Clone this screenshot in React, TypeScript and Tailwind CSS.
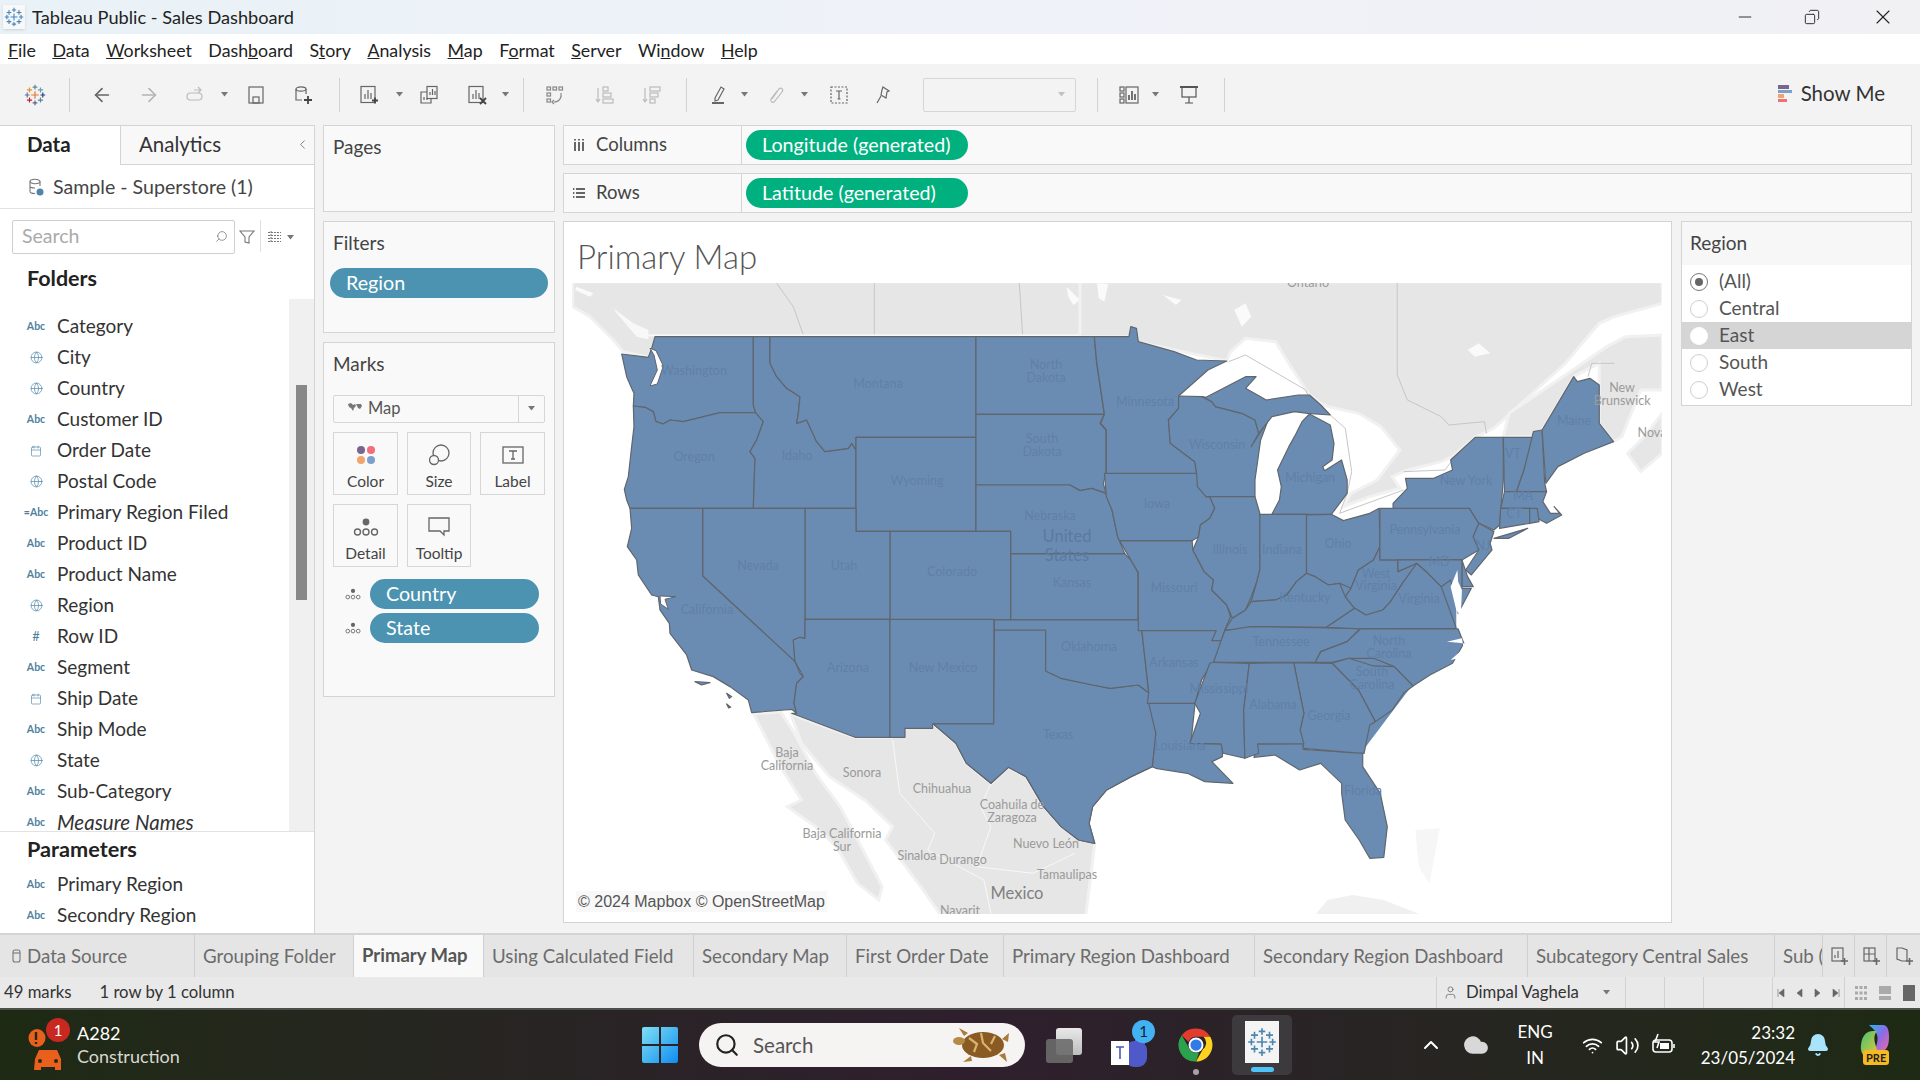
import React from 'react';
import { Globe, Calendar, ChevronLeft, Search, ArrowLeft, ArrowRight, Minus, X, Copy, Wifi, Volume2, ChevronUp, Bell, Cloud, User } from 'lucide-react';

// ---------- map geometry, written in the coordinates read off the reference crops ----------
const WEST = [
  '255,170 550,170 550,375 557,398 450,398 380,415 340,425 300,420 280,432 258,425 250,395 225,382 190,378 192,340 185,325 170,290 155,222 235,232 245,205',
  '190,378 225,382 250,395 258,425 280,432 300,420 340,425 380,415 450,398 557,398 580,425 560,480 540,515 555,535 550,685 180,685 170,660 163,628 175,590 185,500 192,440',
  '550,170 600,170 600,250 620,290 650,325 690,350 685,400 680,430 710,420 740,485 765,515 835,505 845,490 858,510 858,685 550,685 555,535 540,515 560,480 580,425 557,398 550,375',
  '600,170 1218,170 1218,472 858,472 858,510 845,490 835,505 765,515 740,485 710,420 680,430 685,400 690,350 650,325 620,290 600,250',
  '858,472 1218,472 1218,754 858,754',
  '1218,170 1573,170 1580,250 1603,403 1218,403',
  '1218,403 1603,403 1590,430 1608,450 1608,580 1600,610 1608,640 1565,625 1530,632 1500,615 1218,615',
  '1218,615 1500,615 1530,632 1565,625 1608,640 1626,690 1643,770 1648,782 1665,822 1322,822 1322,754 1218,754',
  '1322,822 1665,822 1683,840 1704,878 1704,1020 1322,1020',
  '960,754 1322,754 1322,1020 960,1020',
  '705,685 858,685 858,754 960,754 960,1018 705,1018',
  '398,685 705,685 705,1075 690,1072 670,1080 675,1145 398,888',
  '180,685 398,685 398,888 675,1145 690,1180 700,1190 680,1210 672,1270 680,1300 665,1288 545,1298 535,1260 480,1220 430,1190 365,1170 350,1125 300,1060 298,1030 270,990 265,950 245,945 205,885 200,840 172,800 185,745',
  '705,1018 960,1018 960,1372 855,1372 665,1300 680,1300 672,1270 680,1210 700,1190 675,1145 670,1080 690,1072 705,1075',
  '960,1018 1272,1018 1272,1332 1088,1332 1088,1345 1005,1345 1005,1372 960,1372',
];

const SOUTH = [
  '605,30 678,30 678,153 700,175 745,195 770,205 810,195 825,218 825,250 835,340 830,440 800,470 765,510 745,560 740,610 748,670 725,660 700,620 675,560 650,470 625,442 600,490 565,430 550,370 518,312 604,312',
  '605,30 605,0 810,0 815,30 825,218 810,195 770,205 745,195 700,175 678,153 678,30',
  '810,30 934,30 932,60 930,85 915,130 900,180 891,250 823,250 825,218 815,30',
  '823,250 891,250 885,370 930,372 930,410 915,425 945,490 905,485 880,460 835,445 830,440 835,340',
  '980,372 1045,372 1045,388 1115,398 1130,385 1130,440 1155,520 1165,620 1160,712 1140,715 1125,660 1105,600 1100,520 1100,490 1070,430 1040,450 1005,405 975,412',
];

const EAST = [
  '105,782 298,782 300,810 330,875 355,900 350,930 390,975 400,1010 385,1050 375,1082 350,1082 362,1052 155,1052 155,878 135,840',
  '65,580 310,580 320,630 345,650 358,685 345,715 320,735 315,770 298,782 105,782 100,770 85,690 70,650',
  '38,170 130,170 135,140 150,145 155,185 250,215 310,240 390,243 340,270 262,348 262,385 235,420 240,490 305,545 310,580 70,580 70,450 55,430 65,403 45,250',
  '262,348 325,350 350,365 360,380 430,400 465,420 475,460 455,500 500,420 480,480 465,600 465,650 335,650 312,620 310,580 305,545 240,490 235,420 262,385',
  '325,350 335,352 440,290 468,290 440,325 495,360 580,345 610,345 640,375 665,405 605,400 570,395 510,410 475,460 465,420 430,400 360,380 350,365',
  '610,402 665,435 675,490 670,540 645,560 650,572 695,540 710,600 710,640 680,685 668,703 510,703 530,660 535,620 525,570 555,500 570,470 590,425',
  '335,650 465,650 478,700 478,870 470,905 455,950 440,990 405,1015 390,975 350,930 355,900 330,875 300,810 315,770 320,735 345,715 358,685 345,650',
  '478,703 602,703 602,880 575,905 550,945 520,960 455,965 470,905 478,870',
  '602,705 668,703 700,722 770,700 795,685 797,800 780,840 740,870 720,925 690,910 660,915 625,890 602,880',
  '455,965 520,960 550,945 575,905 602,880 625,890 660,915 690,910 705,950 730,985 655,1042 453,1040 452,1050 385,1050 405,1015 440,990',
  '385,1052 453,1040 745,1045 710,1085 640,1115 625,1147 355,1147 375,1082',
  '720,925 740,870 780,840 797,800 797,840 845,840 845,875 895,850 895,870 860,905 825,965 805,990 760,1005 730,985 705,950',
  '655,1042 730,985 760,1005 805,990 825,965 860,905 895,850 925,880 960,920 1000,1045 745,1047',
  '745,1047 1005,1047 1020,1090 990,1150 930,1185 885,1218 835,1160 780,1135 715,1135 670,1147 625,1147 640,1115 710,1085',
  '670,1150 715,1135 780,1158 835,1160 885,1218 860,1240 830,1290 785,1325 740,1230',
  '568,1148 670,1150 740,1230 785,1325 770,1335 755,1420 725,1418 595,1405 585,1350 595,1300',
  '355,1147 450,1150 435,1290 438,1435 380,1420 375,1392 292,1390 320,1300 305,1270 345,1150',
  '450,1150 568,1148 595,1300 585,1350 595,1392 472,1392 475,1420 438,1435 435,1290',
  '797,685 1035,685 1060,730 1045,770 1060,810 1015,840 797,840',
  '832,685 832,670 870,625 865,595 940,595 990,570 985,540 1050,472 1125,472 1125,600 1115,735 1100,750 1060,730 1035,685',
  '1100,775 1190,745 1140,775',
  '1125,472 1205,472 1180,570 1160,635 1128,635',
  '1205,455 1228,450 1235,610 1240,635 1160,635 1180,570',
  '1228,450 1265,380 1312,290 1322,305 1355,295 1380,315 1380,430 1418,485 1340,520 1270,560 1238,610',
  '1128,635 1240,635 1230,665 1250,700 1275,700 1260,680 1280,705 1240,730 1215,715 1195,685 1118,685',
  '1118,685 1195,685 1195,730 1115,745',
  '1195,685 1215,685 1220,725 1195,730',
  '1060,730 1100,755 1090,790 1095,810 1040,885 1025,870 1060,810 1045,770',
  '1015,840 1030,890 1045,920 1015,920',
  '845,840 1015,840 1015,925 1040,925 1005,1000 985,900 960,920 925,880 895,850 845,875',
];

const STATE_LABELS: [string, number, number][] = [
  ['Washington', 694, 372], ['Montana', 878, 385], ['North', 1046, 366], ['Dakota', 1046, 379], ['South', 1042, 440], ['Dakota', 1042, 453],
  ['Oregon', 694, 458], ['Idaho', 797, 457], ['Wyoming', 917, 482], ['Nebraska', 1050, 517], ['Nevada', 758, 567], ['Utah', 844, 567],
  ['Colorado', 952, 573], ['Kansas', 1072, 584], ['California', 707, 611], ['Arizona', 848, 669], ['New Mexico', 943, 669], ['Oklahoma', 1089, 648],
  ['Texas', 1058, 736], ['Minnesota', 1145, 403], ['Wisconsin', 1217, 446], ['Michigan', 1310, 479], ['Iowa', 1157, 505], ['Illinois', 1230, 551],
  ['Indiana', 1282, 551], ['Ohio', 1338, 545], ['Pennsylvania', 1425, 531], ['New York', 1466, 482], ['VT', 1513, 455], ['MA', 1523, 497],
  ['CT', 1514, 515], ['Maine', 1574, 422], ['NJ', 1483, 547], ['MD', 1439, 563], ['West', 1376, 575], ['Virginia', 1376, 587], ['Virginia', 1419, 600],
  ['Kentucky', 1305, 599], ['Missouri', 1174, 589], ['Tennessee', 1281, 643], ['North', 1389, 642], ['Carolina', 1389, 655], ['Arkansas', 1174, 664],
  ['South', 1372, 673], ['Carolina', 1372, 686], ['Mississippi', 1219, 690], ['Alabama', 1273, 706], ['Georgia', 1329, 717], ['Louisiana', 1180, 747], ['Florida', 1363, 792],
];

const LAND_LABELS: [string, number, number][] = [
  ['New', 1622, 389], ['Brunswick', 1622, 402], ['Nova', 1652, 434], ['Ontario', 1308, 284], ['Baja', 787, 754], ['California', 787, 767], ['Sonora', 862, 774],
  ['Chihuahua', 942, 790], ['Coahuila de', 1012, 806], ['Zaragoza', 1012, 819], ['Baja California', 842, 835], ['Sur', 842, 848], ['Nuevo León', 1046, 845],
  ['Sinaloa', 917, 857], ['Durango', 963, 861], ['Tamaulipas', 1067, 876], ['Navarit', 960, 912],
];

const UsMap = () => {
  const land = { fill: '#e6e6e6', stroke: '#f1f1f1', strokeWidth: 3, vectorEffect: 'non-scaling-stroke' as const };
  const state = { fill: '#6b8cb2', stroke: '#5f666e', strokeWidth: 1.2, strokeLinejoin: 'round' as const, vectorEffect: 'non-scaling-stroke' as const };
  const line = { fill: 'none', stroke: '#c6c6c6', strokeWidth: 1, vectorEffect: 'non-scaling-stroke' as const };
  return (
    <svg viewBox="572 283 1090 631" className="block w-[1090px] h-[631px] bg-white">
      <g transform="translate(570 280) scale(0.3333 0.3333)">
        <polygon {...land} points="8,5 1600,5 1600,170 260,170 235,232 160,215 130,180 60,110 8,80" />
        <polygon points="130,85 190,130 235,150 235,178 200,170 140,100" fill="#f8f8f8" />
        <polygon points="20,20 70,40 60,50 15,30" fill="#fafafa" />
        <polygon points="1490,20 1530,60 1510,75 1495,50" fill="#fafafa" />
        <polyline {...line} points="620,10 670,80 700,165" />
        <polyline {...line} points="913,8 913,165" />
        <polyline {...line} points="1348,8 1358,165" />
        <rect x="230" y="163" width="1370" height="6" fill="#f8f8f8" />
      </g>
      <g transform="translate(1080 280) scale(0.37628 0.3333)">
        <polygon {...land} points="0,5 1547,5 1547,70 1420,110 1380,130 1290,250 1100,445 1050,472 990,530 960,545 870,570 830,590 850,625 770,650 700,680 720,640 790,600 830,540 850,510 800,440 740,400 660,380 640,370 610,345 560,260 520,185 440,175 400,215 390,243 150,185 130,170 0,170" />
        <polygon {...land} points="1140,400 1290,285 1400,200 1450,170 1547,165 1547,330 1490,330 1440,470 1418,485 1380,430 1380,250 1312,290 1265,380 1228,450 1205,470 1125,470" />
        <polygon {...land} points="1455,520 1490,575 1547,520 1547,400 1500,470" />
        <polygon points="410,90 440,70 455,110 430,140" fill="#fafafa" />
        <polygon points="1030,210 1060,190 1090,220 1050,230" fill="#fafafa" />
        <polygon points="220,45 270,60 255,75" fill="#fafafa" />
        <polygon points="45,10 75,12 65,65 50,55" fill="#fafafa" />
        <polyline {...line} points="843,8 843,285 870,360 960,410 980,435 1075,425 1080,460" />
        <polyline {...line} points="1350,290 1360,250 1420,250" />
        <polyline {...line} points="395,245 440,225 600,330 610,360" />
        <polyline {...line} points="660,400 705,445 722,575 710,640 690,700 860,630" />
        <polyline {...line} points="860,575 970,570 990,540" />
      </g>
      <g transform="translate(570 620) scale(0.70153 0.3333)">
        <polygon {...land} points="262,282 300,275 320,340 350,460 385,560 445,800 440,840 410,790 380,680 350,620 310,560 330,540 300,440" />
        <polygon {...land} points="315,283 405,352 460,352 478,325 518,312 550,370 565,430 600,490 625,442 650,470 675,560 700,620 748,670 735,890 530,890 500,800 450,660 460,620 420,540 370,470 330,370" />
        <polyline fill="none" stroke="#f8f8f8" strokeWidth="1" vectorEffect="non-scaling-stroke" points="460,360 470,520 520,640 510,690 590,780 600,880" />
        <polyline fill="none" stroke="#f8f8f8" strokeWidth="1" vectorEffect="non-scaling-stroke" points="600,490 585,560 600,620 580,740 660,760 720,700" />
        <polygon points="1060,890 1080,840 1115,825 1160,840 1220,890" fill="#f0f0f0" />
        <polygon points="1205,630 1240,625 1225,790 1210,740" fill="#f6f6f6" />
        {SOUTH.map((p, i) => <polygon key={i} {...state} points={p} />)}
      </g>
      <g transform="translate(570 280) scale(0.3333 0.3333)">
        {WEST.map((p, i) => <polygon key={i} {...state} points={p} />)}
        <polygon points="240,205 258,212 280,258 262,312 240,318 262,270 252,225" fill="#fff" stroke="#5f666e" strokeWidth="1" vectorEffect="non-scaling-stroke" />
        <polygon points="270,948 318,950 285,958 295,988 272,972" fill="#fff" stroke="#5f666e" strokeWidth="1" vectorEffect="non-scaling-stroke" />
        <polygon points="375,1205 420,1208 395,1215" {...state} />
        <polygon points="470,1240 485,1250 478,1255" {...state} />
        <polygon points="470,1272 482,1282 476,1284" {...state} />
      </g>
      <g transform="translate(570 620) scale(0.70153 0.3333)">
        {SOUTH.slice(0, 3).map((p, i) => <polygon key={i} {...state} points={p} />)}
      </g>
      <g transform="translate(1080 280) scale(0.37628 0.3333)">
        <polygon points="345,800 470,720 700,740 1000,720 1000,1040 760,1400 450,1390 345,1380 345,1150" fill="#6b8cb2" />
        {EAST.map((p, i) => <polygon key={i} {...state} points={p} />)}
        <polygon points="1003,870 985,920 1000,990 1012,1010 1015,930 1005,905" fill="#fff" />
        <polygon points="975,1085 1015,1075 1020,1105 985,1140 1028,1130 1020,1090" fill="#fff" />
      </g>
      <g fontFamily="Lato, sans-serif" fontSize="12.5" textAnchor="middle" dominantBaseline="middle">
        {STATE_LABELS.map(([t, x, y], i) => <text key={i} x={x} y={y} fill="#5f80a8">{t}</text>)}
        {LAND_LABELS.map(([t, x, y], i) => <text key={i} x={x} y={y} fill="#9a9a9a">{t}</text>)}
        <text x="1067" y="538" fontSize="16.5" fill="#5a7a9f">United</text>
        <text x="1067" y="557" fontSize="16.5" fill="#5a7a9f">States</text>
        <text x="1017" y="895" fontSize="16.5" fill="#808080">Mexico</text>
      </g>
    </svg>
  );
};

// ---------- small drawings ----------
const TableauLogo = ({ size = 22, mono }: { size?: number; mono?: string }) => {
  const crosses: [number, number, number, string][] = [
    [12, 12, 4.2, '#e8762c'], [12, 3.5, 2.6, '#5b879b'], [12, 20.5, 2.6, '#5b6591'], [3.5, 12, 2.6, '#4e79a7'], [20.5, 12, 2.6, '#1f447a'],
    [6, 6.5, 2.8, '#eb912b'], [18, 6.5, 2.8, '#7099a6'], [6, 17.5, 2.8, '#c72035'], [18, 17.5, 2.8, '#59879b'],
  ];
  return (
    <svg width={size} height={size} viewBox="0 0 24 24">
      {crosses.map(([x, y, r, c], i) => (
        <path key={i} d={`M${x - r} ${y}H${x + r}M${x} ${y - r}V${y + r}`} stroke={mono ?? c} strokeWidth={1.3} />
      ))}
    </svg>
  );
};

const Caret = ({ className = '' }: { className?: string }) => (
  <svg width="7" height="5" viewBox="0 0 7 5" className={`shrink-0 ${className}`}><path d="M0 0h7L3.5 4.5z" fill="#777" /></svg>
);

const Sep = ({ className = '' }: { className?: string }) => <div className={`w-px h-[34px] bg-[#d2d2d2] ${className}`} />;

const I = ({ children, className = '', color = '#666' }: { children: React.ReactNode; className?: string; color?: string }) => (
  <svg width="20" height="20" viewBox="0 0 20 20" fill="none" stroke={color} strokeWidth="1.2" className={`shrink-0 ${className}`}>{children}</svg>
);

const BarsPlus = () => (<><rect x="2" y="1.5" width="14" height="16" /><path d="M6 14V9M9 14V5M12 14V8" /><path d="M13 15.5h6M16 12.5v6" strokeWidth="1.8" stroke="#444" /></>);

const AbcIcon = ({ pre }: { pre?: boolean }) => (
  <span className="text-[10.5px] font-bold text-[#4f7f9c] leading-none">{pre ? '=Abc' : 'Abc'}</span>
);

type FieldKind = 'abc' | 'geo' | 'date' | 'num' | 'calc';
const FIELDS: [string, FieldKind][] = [
  ['Category', 'abc'], ['City', 'geo'], ['Country', 'geo'], ['Customer ID', 'abc'], ['Order Date', 'date'], ['Postal Code', 'geo'],
  ['Primary Region Filed', 'calc'], ['Product ID', 'abc'], ['Product Name', 'abc'], ['Region', 'geo'], ['Row ID', 'num'], ['Segment', 'abc'],
  ['Ship Date', 'date'], ['Ship Mode', 'abc'], ['State', 'geo'], ['Sub-Category', 'abc'],
];

const FieldIcon = ({ kind }: { kind: FieldKind }) => {
  if (kind === 'geo') return <Globe size={13} strokeWidth={1.3} color="#4f86a8" />;
  if (kind === 'date') return <Calendar size={12} strokeWidth={1.3} color="#4f86a8" />;
  if (kind === 'num') return <span className="text-[13px] text-[#4f7f9c] leading-none">#</span>;
  return <AbcIcon pre={kind === 'calc'} />;
};

const Field = ({ name, kind, italic }: { name: string; kind: FieldKind; italic?: boolean }) => (
  <div className="flex items-center h-[31px] shrink-0">
    <div className="w-[46px] flex justify-center ml-[13px] -mr-[2px]"><FieldIcon kind={kind} /></div>
    <span className={`whitespace-nowrap text-[#333] ${italic ? 'italic text-[20.5px]' : 'text-[19px]'}`}>{name}</span>
  </div>
);

const Pill = ({ children, className }: { children: React.ReactNode; className: string }) => (
  <div className={`h-[30px] rounded-full flex items-center text-white text-[19.7px] ${className}`}>{children}</div>
);

const MarkCard = ({ label, icon, w }: { label: string; icon: React.ReactNode; w: string }) => (
  <div className={`${w} h-[63px] border border-[#d6d6d6] flex flex-col items-center pt-[9px]`}>
    <div className="h-[28px] flex items-center justify-center">{icon}</div>
    <span className="text-[15.5px] text-[#444] mt-[1px]">{label}</span>
  </div>
);

const DetailDots = ({ small }: { small?: boolean }) => (
  <svg width={small ? 16 : 26} height={small ? 14 : 20} viewBox="0 0 26 20" fill="none" stroke="#666" strokeWidth="1.4">
    <circle cx="13" cy="5" r="3.4" fill="#666" stroke="none" />
    <circle cx="4.5" cy="15" r="3" /><circle cx="13" cy="15" r="3" /><circle cx="21.5" cy="15" r="3" />
  </svg>
);

const Tab = ({ label, w, active }: { label: string; w: string; active?: boolean }) => (
  <div className={`${w} h-full shrink-0 border-r border-[#cfcfcf] flex items-center pl-[8px] whitespace-nowrap overflow-hidden ${active ? 'bg-[#f9f9f9] font-bold text-[#555] text-[18.5px]' : 'text-[#6c6c6c] text-[18.7px]'}`}>{label}</div>
);

const RADIOS = ['(All)', 'Central', 'East', 'South', 'West'];

const MENU: [string, string, string][] = [
  ['', 'F', 'ile'], ['', 'D', 'ata'], ['', 'W', 'orksheet'], ['Dash', 'b', 'oard'], ['S', 't', 'ory'], ['', 'A', 'nalysis'], ['', 'M', 'ap'], ['F', 'o', 'rmat'], ['', 'S', 'erver'], ['Wi', 'n', 'dow'], ['', 'H', 'elp'],
];

export default function App() {
  return (
    <div className="w-[1920px] h-[1080px] flex flex-col overflow-hidden bg-[#f3f3f3] text-[#333] [font-family:Lato,sans-serif]">
      {/* Title bar */}
      <div className="h-[34px] shrink-0 flex items-center bg-gradient-to-r from-[#e9f2f6] via-[#eff2f9] to-[#f1f1f4]">
        <div className="ml-[3px] w-[22px] h-[24px] bg-[#f8f8f8] flex items-center justify-center shadow-sm"><TableauLogo size={20} mono="#3f86bd" /></div>
        <span className="ml-[7px] mt-[1px] text-[18.2px] text-[#222]">Tableau Public - Sales Dashboard</span>
        <div className="ml-auto flex items-center text-[#222]">
          <Minus size={20} strokeWidth={1.1} className="mr-[49px]" />
          <Copy size={16} strokeWidth={1.4} className="mr-[51px] -scale-x-100" />
          <X size={24} strokeWidth={1.1} className="mr-[25px]" />
        </div>
      </div>

      {/* Menu */}
      <div className="h-[30px] shrink-0 bg-white flex items-center gap-[16.5px] pl-[8px] pt-[2px] text-[17.8px] text-[#222]">
        {MENU.map(([a, b, c]) => <span key={a + b + c}>{a}<u>{b}</u>{c}</span>)}
      </div>

      {/* Toolbar */}
      <div className="h-[61px] shrink-0 flex items-center">
        <div className="ml-[24px]"><TableauLogo size={22} /></div>
        <Sep className="ml-[23px]" />
        <ArrowLeft size={22} strokeWidth={1.8} color="#666" className="ml-[21px]" />
        <ArrowRight size={22} strokeWidth={1.8} color="#b4b4b4" className="ml-[25px]" />
        <I color="#bbb" className="ml-[25px]"><rect x="2" y="8" width="15" height="7" rx="3.5" /><path d="M9 5h7M13 2l3 3-3 3" /></I>
        <Caret className="ml-[16px]" />
        <I className="ml-[18px]"><rect x="3" y="2" width="14" height="16" /><rect x="7" y="12" width="6" height="6" /></I>
        <I className="ml-[27px]"><ellipse cx="8" cy="4" rx="5" ry="2.2" /><path d="M3 4v11h6M13 4v5" /><path d="M11 15h8M15 11v8" strokeWidth="1.8" stroke="#444" /></I>
        <Sep className="ml-[26px]" />
        <I className="ml-[19px]"><BarsPlus /></I>
        <Caret className="ml-[17px]" />
        <I className="ml-[16px]"><rect x="8" y="1.5" width="10" height="12" /><path d="M11 10V7M13.5 10V4M16 10V6" /><path d="M8 7H2v11h10v-4" /><path d="M5 15v-3M8 15v-2" /></I>
        <I className="ml-[28px]"><rect x="2" y="1.5" width="14" height="16" /><path d="M6 14V9M9 14V5M12 14V8" /><path d="M13 13l6 6M19 13l-6 6" strokeWidth="1.8" stroke="#444" /></I>
        <Caret className="ml-[15px]" />
        <Sep className="ml-[14px]" />
        <I className="ml-[21px]" color="#888"><rect x="2" y="2" width="3.5" height="3" /><rect x="8" y="2" width="3.5" height="3" /><rect x="14" y="2" width="3.5" height="3" /><rect x="2" y="8" width="3.5" height="3" /><rect x="2" y="14" width="3.5" height="3" /><path d="M16 8c1 5-2 9-7 9M9 15l-2 2 2 2" /></I>
        <I className="ml-[29px]" color="#bbb"><rect x="9" y="2" width="5" height="4" /><rect x="9" y="8" width="8" height="4" /><rect x="9" y="14" width="10" height="4" /><path d="M4 3v14M2 14l2 3 2-3" /></I>
        <I className="ml-[27px]" color="#bbb"><rect x="9" y="2" width="10" height="4" /><rect x="9" y="8" width="8" height="4" /><rect x="9" y="14" width="5" height="4" /><path d="M4 3v14M2 14l2 3 2-3" /></I>
        <Sep className="ml-[25px]" />
        <I className="ml-[22px]"><path d="M6 13L12 2l3 2-6 11-3 1z" /><path d="M3 18h12" strokeWidth="2" /></I>
        <Caret className="ml-[12px]" />
        <I className="ml-[18px]" color="#bbb"><path d="M6 14l7-10c2-2 5 0 3 3l-8 10c-1 1-4 0-3-3l6-8" /></I>
        <Caret className="ml-[15px]" />
        <I className="ml-[21px]"><rect x="2" y="2" width="16" height="16" strokeDasharray="2 1.5" /><path d="M7 6h6M10 6v8M8.5 14h3" /></I>
        <I className="ml-[25px]"><path d="M9 2l6 4-2 1-1 6-5-3 1-5zM7 11l-4 7" /></I>
        <div className="ml-[29px] w-[153px] h-[34px] border border-[#d6d6d6] rounded-[2px] flex items-center justify-end pr-[10px]"><Caret className="opacity-40" /></div>
        <Sep className="ml-[21px]" />
        <I className="ml-[21px]"><rect x="1" y="2" width="4" height="4" /><rect x="1" y="8" width="4" height="4" /><rect x="1" y="14" width="4" height="4" /><rect x="7" y="2" width="12" height="16" /><path d="M10 15v-5M13 15V6M16 15V9" strokeWidth="1.8" /></I>
        <Caret className="ml-[13px]" />
        <I className="ml-[20px]" color="#555"><path d="M1 2h18" strokeWidth="2" /><rect x="3" y="2" width="14" height="10" /><path d="M10 12v6M6 18h8" /></I>
        <Sep className="ml-[25px]" />
        <div className="ml-auto mr-[35px] pb-[2px] flex items-center gap-[9px]">
          <div className="flex flex-col gap-[1px]">
            <div className="w-[11px] h-[3.5px] bg-[#7a6591]" />
            <div className="w-[14px] h-[3.5px] bg-[#7ba0cc]" />
            <div className="w-[6px] h-[3.5px] bg-[#f2a46f]" />
            <div className="w-[9px] h-[3.5px] bg-[#f36d7a]" />
          </div>
          <span className="text-[20.5px] text-[#333]">Show Me</span>
        </div>
      </div>

      {/* Main */}
      <div className="h-[808px] shrink-0 flex">
        {/* Data pane */}
        <div className="w-[315px] shrink-0 bg-white border-r border-t border-[#d4d4d4] flex flex-col h-[808px]">
          <div className="h-[39px] shrink-0 flex">
            <div className="w-[120px] flex items-center pl-[27px] pb-[2px] text-[20.5px] font-bold text-[#222]">Data</div>
            <div className="flex-1 flex items-center bg-[#f8f8f8] border-l border-b border-[#d4d4d4] pl-[18px] pr-[8px] pb-[2px] text-[20.5px] text-[#333]">
              Analytics
              <ChevronLeft size={15} strokeWidth={1.3} className="ml-auto -mr-[4px]" color="#666" />
            </div>
          </div>
          <div className="h-[44px] shrink-0 flex items-center border-b border-[#e2e2e2] pl-[28px] gap-[9px]">
            <svg width="16" height="18" viewBox="0 0 16 18" fill="none" stroke="#777" strokeWidth="1.1"><ellipse cx="7" cy="3.5" rx="5" ry="2.2" /><path d="M2 3.5v10c0 1 2 2 5 2M12 3.5V8M2 8c0 1 2 2 5 2" /><circle cx="12" cy="14" r="3.5" fill="#4f86a8" stroke="none" /></svg>
            <span className="text-[19.6px] text-[#444]">Sample - Superstore (1)</span>
          </div>
          <div className="h-[50px] shrink-0 flex items-start pt-[11px] pl-[12px]">
            <div className="w-[223px] h-[34px] border border-[#cfcfcf] rounded-[2px] flex items-center pl-[9px] pr-[6px] pb-[2px] text-[19.5px] text-[#aaa]">
              Search
              <Search size={13} strokeWidth={1.4} color="#777" className="ml-auto -scale-x-100" />
            </div>
            <svg width="16" height="16" viewBox="0 0 16 16" fill="none" stroke="#777" strokeWidth="1.1" className="ml-[4px] mt-[9px]"><path d="M1 2h14L10 8v6l-4-1V8z" /></svg>
            <div className="w-px h-[32px] bg-[#e0e0e0] ml-[5px]" />
            <svg width="13" height="12" viewBox="0 0 13 12" stroke="#777" strokeWidth="1" className="ml-[7px] mt-[11px]"><path d="M0 1.5h13M0 4.5h13M0 7.5h13M0 10.5h13M3 0v12" strokeDasharray="2 1" /></svg>
            <Caret className="ml-[6px] mt-[15px]" />
          </div>
          <div className="h-[40px] shrink-0 flex items-center pl-[27px] pb-[2px] text-[21.5px] font-bold text-[#222]">Folders</div>
          <div className="h-[533px] shrink-0 flex overflow-hidden border-b border-[#e2e2e2]">
            <div className="flex-1 flex flex-col pt-[12px] overflow-hidden">
              {FIELDS.map(([n, k]) => <Field key={n} name={n} kind={k} />)}
              <Field name="Measure Names" kind="abc" italic />
            </div>
            <div className="w-[25px] shrink-0 bg-[#f0f0f0] pl-[7px] pt-[86px]">
              <div className="w-[11px] h-[215px] bg-[#888]" />
            </div>
          </div>
          <div className="h-[37px] shrink-0 flex items-center pl-[27px] pb-[2px] text-[21.7px] font-bold text-[#222]">Parameters</div>
          <Field name="Primary Region" kind="abc" />
          <Field name="Secondry Region" kind="abc" />
        </div>

        {/* Cards column */}
        <div className="w-[232px] shrink-0 ml-[8px] flex flex-col gap-[9px]">
          <div className="h-[87px] bg-[#f9f9f9] border border-[#d4d4d4] pl-[9px] pt-[7px] text-[19px] text-[#444]">Pages</div>
          <div className="h-[112px] bg-[#f9f9f9] border border-[#d4d4d4] pt-[7px] text-[19px] text-[#444]">
            <div className="pl-[9px]">Filters</div>
            <Pill className="mx-[6px] mt-[10px] bg-[#4b93b1] pl-[16px]">Region</Pill>
          </div>
          <div className="h-[355px] bg-[#f9f9f9] border border-[#d4d4d4] pt-[7px]">
            <div className="pl-[9px] text-[19px] text-[#444]">Marks</div>
            <div className="mx-[9px] mt-[16px] h-[28px] border border-[#d6d6d6] rounded-[2px] flex items-center text-[16.5px] text-[#555]">
              <svg width="14" height="11" viewBox="0 0 14 11" className="ml-[14px] mr-[6px]"><path d="M0 1l3-1 2 2 2-1 1 2-2 2-1 3-2-3-2-1zM8 1l5 0 1 2-2 3-2-1-1-2z" fill="#777" /></svg>
              Map
              <div className="ml-auto w-[26px] h-full border-l border-[#d6d6d6] flex items-center justify-center"><Caret /></div>
            </div>
            <div className="mx-[9px] mt-[9px] flex gap-[9px]">
              <MarkCard w="w-[65px]" label="Color" icon={
                <svg width="20" height="20" viewBox="0 0 20 20"><circle cx="5" cy="5" r="4" fill="#7a6591" /><circle cx="15" cy="5" r="4" fill="#f36d7a" /><circle cx="5" cy="15" r="4" fill="#f2a46f" /><circle cx="15" cy="15" r="4" fill="#7ba0cc" /></svg>} />
              <MarkCard w="w-[64px]" label="Size" icon={
                <svg width="22" height="22" viewBox="0 0 22 22" fill="none" stroke="#666" strokeWidth="1.3"><circle cx="13" cy="9" r="8" /><circle cx="6" cy="16" r="4.5" fill="#f9f9f9" /></svg>} />
              <MarkCard w="w-[65px]" label="Label" icon={
                <svg width="22" height="18" viewBox="0 0 22 18" fill="none" stroke="#666" strokeWidth="1.3"><rect x="1" y="1" width="20" height="16" /><path d="M7 5h8M11 5v8M9 13h4" /></svg>} />
            </div>
            <div className="mx-[9px] mt-[9px] flex gap-[9px]">
              <MarkCard w="w-[65px]" label="Detail" icon={<DetailDots />} />
              <MarkCard w="w-[64px]" label="Tooltip" icon={
                <svg width="22" height="20" viewBox="0 0 22 20" fill="none" stroke="#666" strokeWidth="1.3"><path d="M1 1h20v13h-5v4l-4-4H1z" /></svg>} />
            </div>
            <div className="mt-[12px] flex flex-col gap-[4px]">
              {['Country', 'State'].map((n) => (
                <div key={n} className="flex items-center pl-[21px]">
                  <div className="w-[25px] flex"><DetailDots small /></div>
                  <Pill className="w-[169px] bg-[#4b93b1] pl-[16px]">{n}</Pill>
                </div>
              ))}
            </div>
          </div>
        </div>

        {/* Viz column */}
        <div className="w-[1349px] shrink-0 ml-[8px] flex flex-col gap-[8px]">
          <div className="h-[40px] bg-[#f9f9f9] border border-[#d4d4d4] flex items-center">
            <div className="w-[178px] h-full border-r border-[#d4d4d4] flex items-center pl-[9px] gap-[11px] text-[18.5px] text-[#444]">
              <svg width="12" height="12" viewBox="0 0 12 12" stroke="#666" strokeWidth="2"><path d="M2 3v9M6 3v9M10 3v9M2 0v1.4M6 0v1.4M10 0v1.4" /></svg>
              Columns
            </div>
            <Pill className="ml-[4px] w-[222px] bg-[#00b17f] pl-[16px]">Longitude (generated)</Pill>
          </div>
          <div className="h-[40px] bg-[#f9f9f9] border border-[#d4d4d4] flex items-center">
            <div className="w-[178px] h-full border-r border-[#d4d4d4] flex items-center pl-[9px] gap-[11px] text-[18.5px] text-[#444]">
              <svg width="12" height="12" viewBox="0 0 12 12" stroke="#666" strokeWidth="2"><path d="M3 2h9M3 6h9M3 10h9M0 2h1.4M0 6h1.4M0 10h1.4" /></svg>
              Rows
            </div>
            <Pill className="ml-[4px] w-[222px] bg-[#00b17f] pl-[16px]">Latitude (generated)</Pill>
          </div>
          <div className="flex gap-[9px] items-start">
            <div className="w-[1109px] h-[702px] shrink-0 bg-white border border-[#d4d4d4] pl-[8px]">
              <div className="h-[61px] flex items-center pl-[5px] pt-[8px] text-[33px] font-light text-[#555]">Primary Map</div>
              <div className="relative w-[1090px]">
                <UsMap />
                <div className="absolute left-[4px] bottom-[2px] h-[21px] px-[2px] bg-[#f8f8f8] flex items-center text-[16px] text-[#555] [font-family:'Liberation_Sans',sans-serif]">© 2024 Mapbox © OpenStreetMap</div>
              </div>
            </div>
            <div className="w-[231px] shrink-0 h-[185px] bg-white border border-[#d4d4d4]">
              <div className="h-[43px] bg-[#f7f7f7] flex items-center pl-[8px] text-[19px] text-[#444]">Region</div>
              <div className="pt-[3px] flex flex-col">
                {RADIOS.map((r, i) => (
                  <div key={r} className={`h-[27px] flex items-center pl-[8px] gap-[11px] text-[19px] text-[#555] ${r === 'East' ? 'bg-[#d5d5d5]' : ''}`}>
                    <div className={`w-[18px] h-[18px] rounded-full flex items-center justify-center bg-white border ${i === 0 ? 'border-[#777]' : r === 'East' ? 'border-white' : 'border-[#cfcfcf]'}`}>
                      {i === 0 && <div className="w-[8px] h-[8px] rounded-full bg-[#666]" />}
                    </div>
                    {r}
                  </div>
                ))}
              </div>
            </div>
          </div>
        </div>
      </div>

      {/* Sheet tabs */}
      <div className="h-[44px] shrink-0 bg-[#e5e5e5] border-t-2 border-[#d4d4d4] flex">
        <div className="w-[195px] h-full shrink-0 border-r border-[#cfcfcf] flex items-center pl-[12px] gap-[6px] text-[18.7px] text-[#6c6c6c]">
          <svg width="9" height="14" viewBox="0 0 9 14" fill="none" stroke="#777" strokeWidth="1.1"><rect x="1" y="1" width="7" height="12" rx="2" /><path d="M1 4h7" /></svg>
          Data Source
        </div>
        <Tab w="w-[159px]" label="Grouping Folder" />
        <Tab w="w-[130px]" label="Primary Map" active />
        <Tab w="w-[210px]" label="Using Calculated Field" />
        <Tab w="w-[153px]" label="Secondary Map" />
        <Tab w="w-[157px]" label="First Order Date" />
        <Tab w="w-[251px]" label="Primary Region Dashboard" />
        <Tab w="w-[273px]" label="Secondary Region Dashboard" />
        <Tab w="w-[247px]" label="Subcategory Central Sales" />
        <div className="w-[48px] h-full shrink-0 border-r border-[#cfcfcf] flex items-center pl-[8px] overflow-hidden whitespace-nowrap text-[18.7px] text-[#6c6c6c]">Sub (</div>
        <div className="w-[32px] h-full shrink-0 border-r border-[#cfcfcf] flex items-center justify-center"><I><rect x="3" y="2" width="11" height="13" /><path d="M6 12V9M9 12V5" /><path d="M12 15h7M15.5 12v7" strokeWidth="1.6" /></I></div>
        <div className="w-[32px] h-full shrink-0 border-r border-[#cfcfcf] flex items-center justify-center"><I><rect x="3" y="2" width="11" height="13" /><path d="M3 8h11M8 2v13" /><path d="M12 15h7M15.5 12v7" strokeWidth="1.6" /></I></div>
        <div className="w-[33px] h-full shrink-0 flex items-center justify-center"><I><path d="M3 2h5l5 2v11H8l-5-2z" /><path d="M12 15h7M15.5 12v7" strokeWidth="1.6" /></I></div>
      </div>

      {/* Status bar */}
      <div className="h-[31px] shrink-0 bg-[#e9e9e9] flex items-center text-[16.7px] text-[#333]">
        <span className="ml-[4px]">49 marks</span>
        <span className="ml-[28px]">1 row by 1 column</span>
        <div className="ml-auto h-full flex items-center">
          <div className="w-[190px] h-full border-l border-r border-[#d2d2d2] flex items-center pl-[6px] gap-[8px]">
            <User size={15} strokeWidth={1.2} color="#666" />
            <span>Dimpal Vaghela</span>
            <Caret className="ml-auto mr-[15px]" />
          </div>
          <div className="w-[39px] h-full border-r border-[#d2d2d2]" />
          <div className="w-[39px] h-full border-r border-[#d2d2d2]" />
          <div className="w-[69px] h-full border-r border-[#d2d2d2]" />
          <div className="w-[72px] h-full border-r border-[#d2d2d2] flex items-center justify-center gap-[9px]">
            {['M7 1L2 5l5 4zM1 1v8', 'M7 1L2 5l5 4z', 'M2 1l5 4-5 4z', 'M2 1l5 4-5 4zM8 1v8'].map((d) => (
              <svg key={d} width="9" height="10" viewBox="0 0 9 10"><path d={d} fill="#666" stroke="#666" strokeWidth="0.6" /></svg>
            ))}
          </div>
          <div className="w-[75px] h-full flex items-center pl-[10px] gap-[12px]">
            <svg width="12" height="14" viewBox="0 0 12 14" fill="#aaa"><path d="M0 0h3v3H0zM4.5 0h3v3h-3zM9 0h3v3H9zM0 5.5h3v3H0zM4.5 5.5h3v3h-3zM9 5.5h3v3H9zM0 11h3v3H0zM4.5 11h3v3h-3zM9 11h3v3H9z" /></svg>
            <svg width="12" height="14" viewBox="0 0 12 14" fill="#aaa"><path d="M0 0h12v8H0zM0 10h12v4H0z" /></svg>
            <div className="w-[12px] h-[16px] bg-[#666]" />
          </div>
        </div>
      </div>

      {/* Windows taskbar */}
      <div className="h-[72px] shrink-0 border-t-2 border-[#4c4f4a] flex items-center text-white bg-gradient-to-r from-[#1e2a14] via-[#2f1f2e] to-[#1e2a14]">
        <div className="relative ml-[28px] w-[40px] h-[50px] shrink-0">
          <svg width="40" height="46" viewBox="0 0 40 46" className="mt-[6px]">
            <ellipse cx="9" cy="12" rx="8.5" ry="9" fill="#e8601c" />
            <path d="M8 6v8M8 16v2" stroke="#1e2a14" strokeWidth="2.4" />
            <path d="M7 33l4-9h18l4 9v11h-6v-3H13v3H6z" fill="#e8601c" />
            <circle cx="12" cy="35" r="2" fill="#1e2a14" /><circle cx="28" cy="35" r="2" fill="#1e2a14" />
          </svg>
          <div className="absolute left-[18px] -top-[2px] w-[24px] h-[24px] rounded-full bg-[#c8281f] flex items-center justify-center text-[15px]">1</div>
        </div>
        <div className="ml-[9px] w-[120px] shrink-0 flex flex-col leading-[23px]">
          <span className="text-[18px]">A282</span>
          <span className="text-[18px] text-[#d8d8d0]">Construction</span>
        </div>
        <svg width="36" height="36" viewBox="0 0 36 36" className="ml-[445px] shrink-0">
          <defs><linearGradient id="winlogo" x1="0" y1="0" x2="1" y2="1"><stop offset="0" stopColor="#7fe0f4" /><stop offset="1" stopColor="#0f8cf0" /></linearGradient></defs>
          <path d="M0 2a2 2 0 0 1 2-2h15v17H0zM19 0h15a2 2 0 0 1 2 2v15H19zM0 19h17v17H2a2 2 0 0 1-2-2zM19 19h17v15a2 2 0 0 1-2 2H19z" fill="url(#winlogo)" />
        </svg>
        <div className="ml-[21px] w-[326px] h-[44px] shrink-0 rounded-full bg-[#f6f3f3] flex items-center pl-[15px] text-[#555]">
          <Search size={26} strokeWidth={2} color="#222" />
          <span className="ml-[13px] text-[20.5px]">Search</span>
          <svg width="62" height="38" viewBox="0 0 62 38" className="ml-auto mr-[10px]">
            <ellipse cx="30" cy="19" rx="21" ry="13" fill="#8a5a24" />
            <path d="M16 12l8 6-3 8M28 7l2 10 8 8M42 10l-4 8" stroke="#d9b36a" strokeWidth="2.2" fill="none" />
            <ellipse cx="6" cy="15" rx="6" ry="4" fill="#b58a46" />
            <path d="M15 7L6 2l5 8zM18 30l-8 6 9-1zM46 29l8 7-2-9zM49 13l7-6-1 9z" fill="#a87c3c" />
          </svg>
        </div>
        <div className="ml-[21px] relative w-[36px] h-[34px] shrink-0">
          <div className="absolute left-[10px] top-0 w-[26px] h-[27px] rounded-[3px] bg-gradient-to-b from-[#e9e9e9] to-[#bdbdbd]" />
          <div className="absolute left-0 top-[11px] w-[27px] h-[24px] rounded-[3px] bg-[#6c6c6c]/90" />
        </div>
        <div className="ml-[29px] relative w-[40px] h-[44px] shrink-0">
          <svg width="40" height="44" viewBox="0 0 40 44" className="mt-[3px]">
            <circle cx="29" cy="16" r="5" fill="#7b83eb" />
            <rect x="14" y="15" width="22" height="26" rx="9" fill="#5059c9" />
            <rect x="0" y="15" width="18" height="24" fill="#fff" />
            <path d="M5 21h8M9 21v12" stroke="#4b53bc" strokeWidth="1.6" />
          </svg>
          <div className="absolute left-[21px] -top-[3px] w-[23px] h-[23px] rounded-full bg-[#43b2f2] flex items-center justify-center text-[15px] text-[#123]">1</div>
        </div>
        <div className="ml-[27px] relative w-[36px] flex justify-center shrink-0">
          <svg width="36" height="36" viewBox="0 0 48 48">
            <path d="M24 2a22 22 0 0 1 19 11H24a11 11 0 0 0-10 7L5 11A22 22 0 0 1 24 2z" fill="#e33b2e" />
            <path d="M43 13a22 22 0 0 1-19 33l9-16a11 11 0 0 0 1-17z" fill="#fdd11d" />
            <path d="M24 46A22 22 0 0 1 5 11l9 16a11 11 0 0 0 14 7z" fill="#2ca24d" />
            <circle cx="24" cy="24" r="10" fill="#fff" /><circle cx="24" cy="24" r="7.5" fill="#2f7be8" />
          </svg>
          <div className="absolute left-[15px] top-[42px] w-[6px] h-[6px] rounded-full bg-[#a8a0a8]" />
        </div>
        <div className="ml-[18px] w-[60px] h-[60px] shrink-0 rounded-[5px] bg-[#3c3a3c] flex flex-col items-center pt-[6px]">
          <div className="w-[34px] h-[42px] bg-[#f4f4f4] flex items-center justify-center"><TableauLogo size={30} mono="#4b87b0" /></div>
          <div className="mt-[4px] w-[23px] h-[5px] rounded-full bg-[#4fc3f7]" />
        </div>
        <ChevronUp size={24} strokeWidth={2} className="ml-[127px] shrink-0" />
        <Cloud size={26} fill="#d8d8d8" color="#d8d8d8" className="ml-[20px] shrink-0" />
        <div className="ml-[28px] w-[36px] shrink-0 flex flex-col items-center text-[17px] leading-[26px]"><span>ENG</span><span>IN</span></div>
        <Wifi size={21} strokeWidth={2} className="ml-[29px] shrink-0" />
        <Volume2 size={25} strokeWidth={1.6} className="ml-[12px] shrink-0" />
        <svg width="26" height="26" viewBox="0 0 26 26" fill="none" stroke="#fff" strokeWidth="1.6" className="ml-[10px] shrink-0"><rect x="3" y="8" width="19" height="12" rx="3" /><path d="M24 12v4" /><path d="M8 2L5 10h4l-2 6" /><rect x="10" y="11" width="9" height="6" fill="#fff" stroke="none" /></svg>
        <div className="ml-auto flex flex-col items-end text-[17px] leading-[25px] shrink-0"><span>23:32</span><span>23/05/2024</span></div>
        <Bell size={24} fill="#a8e4fb" color="#a8e4fb" className="ml-[11px] shrink-0" />
        <div className="relative ml-[27px] mr-[27px] w-[36px] h-[44px] shrink-0">
          <svg width="36" height="36" viewBox="0 0 36 36">
            <defs><linearGradient id="copi" x1="0" y1="0" x2="1" y2="1"><stop offset="0" stopColor="#25b7f0" /><stop offset="0.5" stopColor="#8a6be8" /><stop offset="1" stopColor="#f06aa0" /></linearGradient><linearGradient id="copi2" x1="0" y1="0" x2="1" y2="1"><stop offset="0" stopColor="#3fc56f" /><stop offset="1" stopColor="#f2c53a" /></linearGradient></defs>
            <path d="M12 2h14c4 0 6 4 6 12s-2 14-8 14H18l2-8c2-8-1-12-8-18z" fill="url(#copi)" />
            <path d="M16 8C10 8 5 12 4 22c-1 6 2 12 6 12h12l-4-14c-1-5-1-8 2-12z" fill="url(#copi2)" />
          </svg>
          <div className="absolute left-[6px] top-[27px] px-[3px] h-[15px] rounded-[3px] bg-[#f5b921] text-[#222] text-[11px] font-bold leading-[15px]">PRE</div>
        </div>
      </div>
    </div>
  );
}
